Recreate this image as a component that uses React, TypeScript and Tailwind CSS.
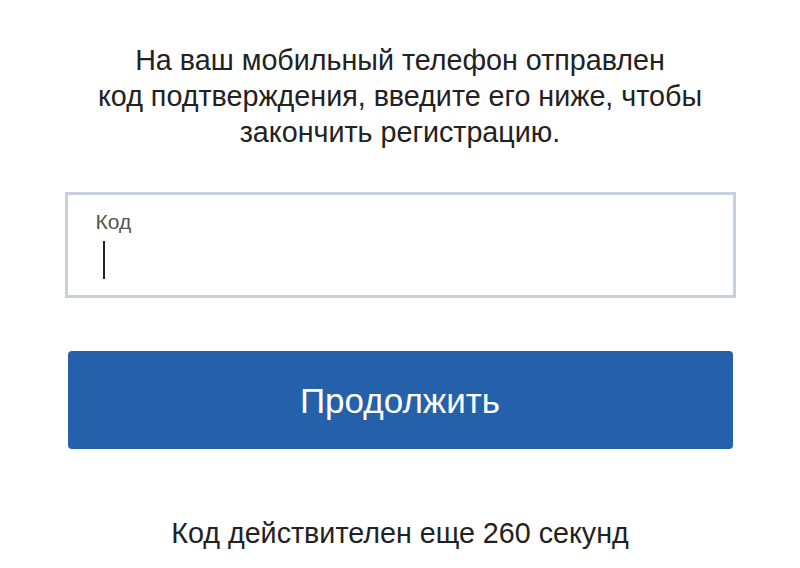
export default function App() {
  return (
    <div className="w-[800px] h-[568px] bg-white flex flex-col items-center font-['Liberation_Sans',Arial,sans-serif] text-[#222]">
      <p className="mt-[42px] text-center text-[28.7px] leading-[36px]">
        На ваш мобильный телефон отправлен
        <br />
        код подтверждения, введите его ниже, чтобы
        <br />
        закончить регистрацию.
      </p>

      <div className="mt-[42px] w-[671px] h-[106px] border-[3px] border-[#c4cfe0] bg-white px-[28px] pt-[15px]">
        <div className="text-[21px] leading-[24px] text-[#555]">Код</div>
        <div className="mt-[7px] ml-[7px] w-[2px] h-[38px] bg-[#222]" />
      </div>

      <button className="mt-[53px] w-[665px] h-[98px] rounded-[4px] bg-[#2560aa] text-white text-[35px] leading-none">
        Продолжить
      </button>

      <p className="mt-[67px] text-center text-[28.7px] leading-[34px]">Код действителен еще 260 секунд</p>
    </div>
  )
}
